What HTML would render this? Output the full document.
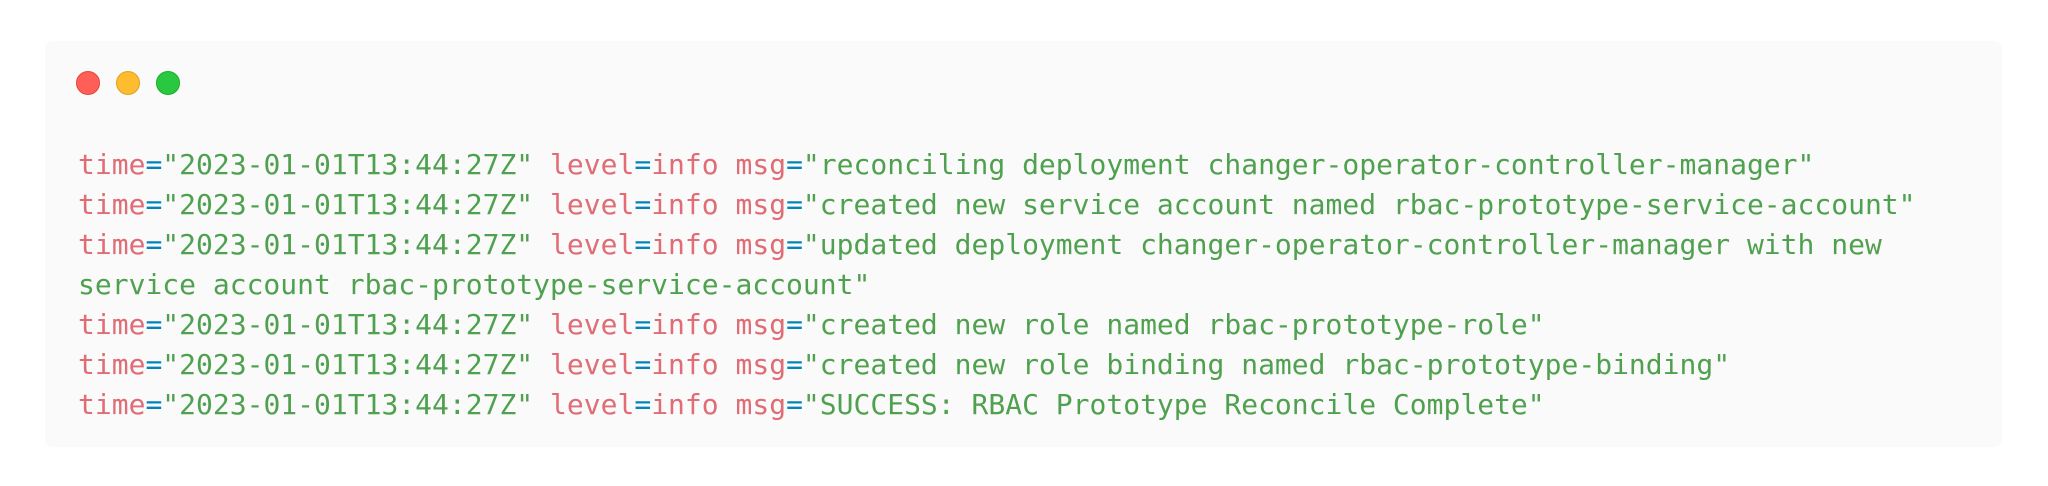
<!DOCTYPE html>
<html><head><meta charset="utf-8"><style>
html,body{margin:0;padding:0;background:#fff;width:2048px;height:486px;overflow:hidden}
.card{position:absolute;left:45px;top:41px;width:1957px;height:406px;background:#fafafa;border-radius:8px}
.dot{position:absolute;top:30px;width:24px;height:24px;border-radius:50%;box-sizing:border-box}
.r{left:31px;background:#ff5f57;border:1px solid #e0443e}
.y{left:71px;background:#febc2e;border:1px solid #dea123}
.g{left:111px;background:#28c840;border:1px solid #1aab29}
pre{position:absolute;left:33px;top:104px;margin:0;font-family:"DejaVu Sans Mono","Liberation Mono",monospace;font-size:28px;line-height:40px;color:#50a14f}
.k{color:#e06c75}.e{color:#0184bc}
</style></head><body>
<div class="card">
<div class="dot r"></div><div class="dot y"></div><div class="dot g"></div>
<pre><span class="k">time</span><span class="e">=</span>"2023-01-01T13:44:27Z" <span class="k">level</span><span class="e">=</span><span class="k">info</span> <span class="k">msg</span><span class="e">=</span>"reconciling deployment changer-operator-controller-manager"
<span class="k">time</span><span class="e">=</span>"2023-01-01T13:44:27Z" <span class="k">level</span><span class="e">=</span><span class="k">info</span> <span class="k">msg</span><span class="e">=</span>"created new service account named rbac-prototype-service-account"
<span class="k">time</span><span class="e">=</span>"2023-01-01T13:44:27Z" <span class="k">level</span><span class="e">=</span><span class="k">info</span> <span class="k">msg</span><span class="e">=</span>"updated deployment changer-operator-controller-manager with new
service account rbac-prototype-service-account"
<span class="k">time</span><span class="e">=</span>"2023-01-01T13:44:27Z" <span class="k">level</span><span class="e">=</span><span class="k">info</span> <span class="k">msg</span><span class="e">=</span>"created new role named rbac-prototype-role"
<span class="k">time</span><span class="e">=</span>"2023-01-01T13:44:27Z" <span class="k">level</span><span class="e">=</span><span class="k">info</span> <span class="k">msg</span><span class="e">=</span>"created new role binding named rbac-prototype-binding"
<span class="k">time</span><span class="e">=</span>"2023-01-01T13:44:27Z" <span class="k">level</span><span class="e">=</span><span class="k">info</span> <span class="k">msg</span><span class="e">=</span>"SUCCESS: RBAC Prototype Reconcile Complete"</pre>
</div>
</body></html>
